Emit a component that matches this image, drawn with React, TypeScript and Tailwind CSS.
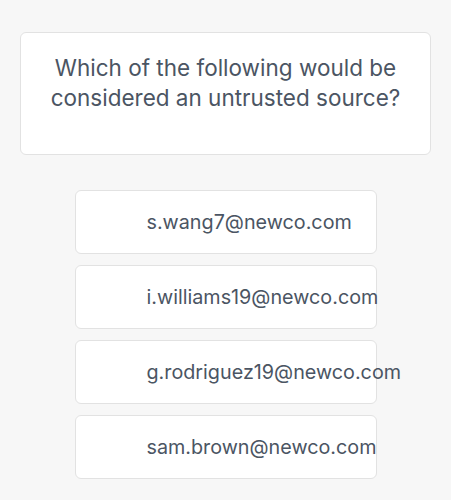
import React from 'react';

const options = [
  's.wang7@newco.com',
  'i.williams19@newco.com',
  'g.rodriguez19@newco.com',
  'sam.brown@newco.com',
];

const OptionCard: React.FC<{ label: string }> = ({ label }) => (
  <button className="flex h-[64px] w-[302px] items-center rounded-md border border-[#e2e2e2] bg-white pl-[71px] text-left">
    <span className="whitespace-nowrap text-[19.75px] leading-[28px] text-[#4b5563]">{label}</span>
  </button>
);

const App: React.FC = () => {
  return (
    <div
      className="min-h-[500px] bg-[#f7f7f7] px-[20px] pt-[32px]"
      style={{ fontFamily: 'Inter, "Noto Sans", sans-serif' }}
    >
      <div className="flex h-[123px] items-start justify-center rounded-md border border-[#e2e2e2] bg-white px-4 pt-[20px]">
        <p className="text-center text-[22.5px] leading-[30px] text-[#4b5563]">
          Which of the following would be considered an untrusted source?
        </p>
      </div>
      <div className="mt-[35px] flex flex-col items-center gap-[11px]">
        {options.map((o) => (
          <OptionCard key={o} label={o} />
        ))}
      </div>
    </div>
  );
};

export default App;
